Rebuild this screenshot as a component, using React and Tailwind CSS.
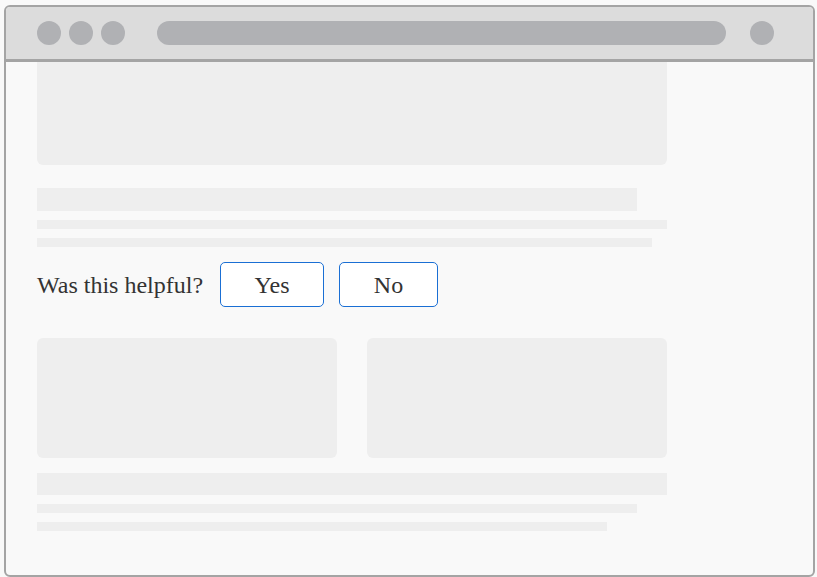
import React from "react";

const Bar = ({ className }) => <div className={`bg-[#eeeeee] ${className}`} />;

export default function App() {
  return (
    <div className="w-[817px] h-[577px] bg-[#f9f9f9] pl-[4px] pt-[5px]">
      <div className="w-[811px] h-[572px] border-2 border-[#a4a4a4] rounded-[6px] overflow-hidden flex flex-col bg-[#f9f9f9]">
        {/* title bar */}
        <div className="h-[55px] shrink-0 bg-[#dcdcdc] border-b-[3px] border-[#a4a4a4] flex items-center pl-[31px] pr-[39px]">
          <div className="flex gap-[8px]">
            <div className="w-[24px] h-[24px] rounded-full bg-[#b0b1b4]" />
            <div className="w-[24px] h-[24px] rounded-full bg-[#b0b1b4]" />
            <div className="w-[24px] h-[24px] rounded-full bg-[#b0b1b4]" />
          </div>
          <div className="ml-[32px] flex-1 h-[24px] rounded-full bg-[#b0b1b4]" />
          <div className="ml-[24px] w-[24px] h-[24px] rounded-full bg-[#b0b1b4]" />
        </div>

        {/* page content */}
        <div className="pl-[31px] flex flex-col">
          <Bar className="w-[630px] h-[103px] rounded-b-[6px]" />
          <Bar className="mt-[23px] w-[600px] h-[23px]" />
          <Bar className="mt-[9px] w-[630px] h-[9px]" />
          <Bar className="mt-[9px] w-[615px] h-[9px]" />

          <div className="mt-[15px] flex items-center h-[45px] text-[#333333] text-[24px] font-['Liberation_Serif','Times_New_Roman',serif]">
            <span>Was this helpful?</span>
            <button className="ml-[17px] w-[104px] h-[45px] bg-white border border-[#1a6fd4] rounded-[5px] flex items-center justify-center">
              Yes
            </button>
            <button className="ml-[15px] w-[99px] h-[45px] bg-white border border-[#1a6fd4] rounded-[5px] flex items-center justify-center">
              No
            </button>
          </div>

          <div className="mt-[31px] flex gap-[30px]">
            <Bar className="w-[300px] h-[120px] rounded-[6px]" />
            <Bar className="w-[300px] h-[120px] rounded-[6px]" />
          </div>
          <Bar className="mt-[15px] w-[630px] h-[22px]" />
          <Bar className="mt-[9px] w-[600px] h-[9px]" />
          <Bar className="mt-[9px] w-[570px] h-[9px]" />
        </div>
      </div>
    </div>
  );
}
